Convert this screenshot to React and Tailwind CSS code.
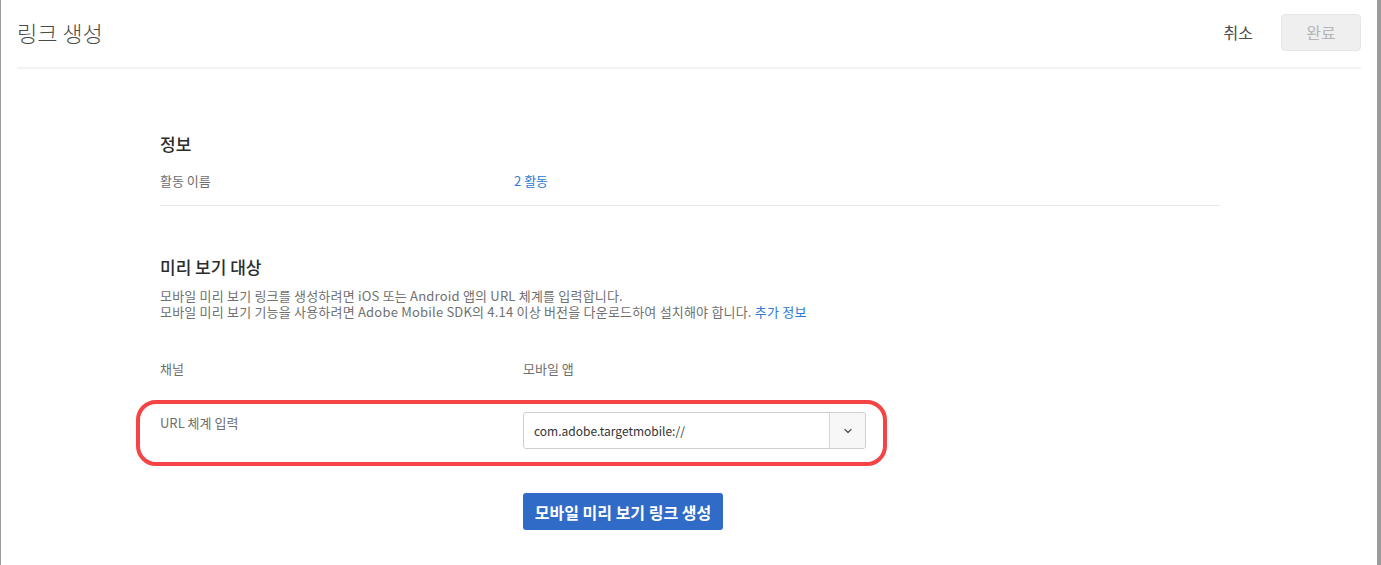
import { ChevronDown } from 'lucide-react';

const font = { fontFamily: '"Noto Sans CJK KR", "Source Sans Pro", "Noto Sans", sans-serif' };

export default function App() {
    return (
        <div className="flex h-[565px] w-[1381px] bg-[#9a9a9a] overflow-hidden" style={font}>
            <div className="ml-px flex w-[1376px] flex-col bg-white">
                {/* header */}
                <div className="mx-4 flex h-[69px] items-center justify-between border-b-2 border-[#f3f3f3] pb-[3px]">
                    <h1 className="text-[22px] font-light text-[#4b4b4b]">링크 생성</h1>
                    <div className="flex items-center gap-7">
                        <button className="text-[16px] text-[#4b4b4b]">취소</button>
                        <button className="h-[37px] w-[80px] rounded-[4px] border border-[#e6e6e6] bg-[#efefef] text-[16px] text-[#b5b5b5]">
                            완료
                        </button>
                    </div>
                </div>

                {/* content */}
                <div className="ml-[159px] w-[1060px] pt-[63px]">
                    <h2 className="text-[17px] font-medium leading-6 text-[#2c2c2c]">정보</h2>
                    <div className="mt-[16px] flex pb-[15px] text-[13px] leading-[18px]">
                        <div className="w-[354px] text-[#6e6e6e]">활동 이름</div>
                        <a className="text-[#2d7ad3]">2 활동</a>
                    </div>
                    <div className="h-px bg-[#e8e8e8]" />

                    <h2 className="mt-[49px] text-[17px] font-medium leading-6 text-[#2c2c2c]">미리 보기 대상</h2>
                    <p className="mt-[9px] text-[13px] leading-4 tracking-[0.2px] text-[#707070]">
                        모바일 미리 보기 링크를 생성하려면 iOS 또는 Android 앱의 URL 체계를 입력합니다.
                        <br />
                        모바일 미리 보기 기능을 사용하려면 Adobe Mobile SDK의 4.14 이상 버전을 다운로드하여 설치해야 합니다.{' '}
                        <a className="text-[#2d7ad3]">추가 정보</a>
                    </p>

                    <div className="mt-[40px] flex text-[13px] leading-[18px] text-[#6e6e6e]">
                        <div className="w-[363px]">채널</div>
                        <div>모바일 앱</div>
                    </div>

                    <div className="relative mt-[34px] flex w-[706px]">
                        <div className="w-[363px] pt-[2px] text-[13px] leading-[18px] text-[#6e6e6e]">URL 체계 입력</div>
                        <div className="flex h-[37px] w-[343px] rounded-[3px] border border-[#cfcfcf] bg-white">
                            <div className="flex flex-1 items-center pl-[10px] text-[12px] text-[#333]">
                                com.adobe.targetmobile://
                            </div>
                            <div className="flex w-[36px] items-center justify-center border-l border-[#d6d6d6] bg-[#f7f7f7] rounded-r-[3px]">
                                <ChevronDown size={12} strokeWidth={2.5} className="text-[#555]" />
                            </div>
                        </div>
                        {/* highlight annotation */}
                        <div className="pointer-events-none absolute -left-[24px] -top-[12px] h-[66px] w-[751px] rounded-[20px] border-4 border-[#f44445]" />
                    </div>

                    <div className="mt-[44px] pl-[363px]">
                        <button className="h-[37px] w-[200px] rounded-[3px] bg-[#2f6bc7] text-[16px] font-bold text-white">
                            모바일 미리 보기 링크 생성
                        </button>
                    </div>
                </div>
            </div>
        </div>
    );
}
